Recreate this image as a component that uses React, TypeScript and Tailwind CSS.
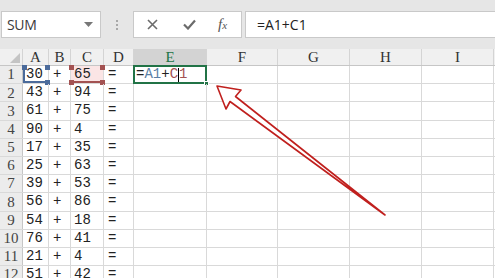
import React from "react";

const cols = [
  { key: "A", w: "w-[26px]" },
  { key: "B", w: "w-[22px]" },
  { key: "C", w: "w-[33px]" },
  { key: "D", w: "w-[30px]" },
  { key: "E", w: "w-[73px]" },
  { key: "F", w: "w-[71px]" },
  { key: "G", w: "w-[72px]" },
  { key: "H", w: "w-[72px]" },
  { key: "I", w: "w-[72px]" },
];

const rows = [
  ["30", "65"],
  ["43", "94"],
  ["61", "75"],
  ["90", "4"],
  ["17", "35"],
  ["25", "63"],
  ["39", "53"],
  ["56", "86"],
  ["54", "18"],
  ["76", "41"],
  ["21", "4"],
  ["51", "42"],
];

const cellFont = { fontFamily: '"Liberation Mono", "DejaVu Sans Mono", monospace' };
const headFont = { fontFamily: '"Liberation Serif", "DejaVu Serif", serif' };

const Handle = ({ className }: { className: string }) => (
  <span className={`absolute w-[5px] h-[5px] ${className}`} />
);

const TopBar = () => (
  <div className="h-[49px] bg-[#e6e6e6] flex items-start pt-[11px] font-['Open_Sans',sans-serif]">
    <div className="ml-[1px] w-[100px] h-[27px] bg-white border border-[#c9c9c9] flex items-center justify-between pl-[5px] pr-[7px]">
      <span className="text-[14px] text-[#3a3a3a] tracking-tight">SUM</span>
      <svg width="9" height="6" viewBox="0 0 9 6">
        <path d="M0 0 H9 L4.5 5 Z" fill="#777" />
      </svg>
    </div>
    <div className="w-[32px] h-[27px] flex flex-col items-center justify-center gap-[2px]">
      <span className="w-[2px] h-[2px] bg-[#a8a8a8]" />
      <span className="w-[2px] h-[2px] bg-[#a8a8a8]" />
      <span className="w-[2px] h-[2px] bg-[#a8a8a8]" />
    </div>
    <div className="w-[109px] h-[27px] bg-white border border-[#c9c9c9] flex items-center">
      <svg className="ml-[13px]" width="11" height="11" viewBox="0 0 11 11">
        <path d="M1 1 L10 10 M10 1 L1 10" stroke="#6b6b6b" strokeWidth="1.6" />
      </svg>
      <svg className="ml-[25px]" width="13" height="11" viewBox="0 0 13 11">
        <path d="M1 5.5 L5 9.5 L12 1.5" stroke="#6b6b6b" strokeWidth="2.2" fill="none" />
      </svg>
      <span className="ml-[22px] italic text-[15px] text-[#555] font-['Liberation_Serif',serif] leading-none">
        f<span className="text-[11px]">x</span>
      </span>
    </div>
    <div className="ml-[3px] flex-1 h-[27px] bg-white border border-[#c9c9c9] border-r-0 flex items-center pl-[11px]">
      <span className="text-[14px] text-[#222]">=A1+C1</span>
    </div>
  </div>
);

const HeaderRow = () => (
  <div className="flex h-[17px] bg-[#f0f0f0] border-b border-[#c6c6c6]" style={headFont}>
    <div className="w-[23px] relative border-r border-[#d4d4d4]">
      <svg className="absolute left-[10px] top-[4px]" width="10" height="10" viewBox="0 0 10 10">
        <path d="M10 0 L10 10 L0 10 Z" fill="#c4c4c4" />
      </svg>
    </div>
    {cols.map((c) => (
      <div
        key={c.key}
        className={`${c.w} shrink-0 flex items-center justify-center border-r border-[#d4d4d4] text-[15px] ${
          c.key === "E" ? "bg-[#d3d3d3] text-[#217346]" : "text-[#333]"
        }`}
      >
        {c.key}
      </div>
    ))}
  </div>
);

const DataRow = ({ n, a, c }: { n: number; a: string; c: string }) => {
  const first = n === 1;
  return (
    <div className="flex h-[18.2px] border-b border-[#d9d9d9] text-[14px] text-[#222]" style={cellFont}>
      <div
        className="w-[23px] shrink-0 bg-[#ececec] border-r border-[#c6c6c6] flex items-center justify-center text-[15px] text-[#444]"
        style={headFont}
      >
        {n}
      </div>
      <div className="w-[26px] shrink-0 relative flex items-center pl-[3px] border-r border-[#d9d9d9]">
        {a}
        {first && (
          <>
            <span className="absolute inset-[0px] border-2 border-[#4b6b9b] border-t-0 border-r-0" />
            <Handle className="bg-[#4b6b9b] -left-[1px] -top-[1px] h-[4px] w-[3px]" />
            <Handle className="bg-[#4b6b9b] -right-[2px] -top-[1px]" />
            <Handle className="bg-[#4b6b9b] -right-[2px] -bottom-[2px]" />
          </>
        )}
      </div>
      <div className="w-[22px] shrink-0 flex items-center pl-[4px] border-r border-[#d9d9d9]">+</div>
      <div
        className={`w-[33px] shrink-0 relative flex items-center pl-[3px] border-r border-[#d9d9d9] ${
          first ? "bg-[#fbe5e5]" : ""
        }`}
      >
        {c}
        {first && (
          <>
            <span className="absolute inset-0 border-b-2 border-[#a35252]" />
            <Handle className="bg-[#a35252] -left-[2px] -top-[1px]" />
            <Handle className="bg-[#a35252] -right-[2px] -top-[1px]" />
            <Handle className="bg-[#a35252] -left-[2px] -bottom-[2px]" />
            <Handle className="bg-[#a35252] -right-[2px] -bottom-[2px]" />
          </>
        )}
      </div>
      <div className="w-[30px] shrink-0 flex items-center pl-[4px] border-r border-[#d9d9d9]">=</div>
      <div className="w-[73px] shrink-0 relative flex items-center pl-[2px] border-r border-[#d9d9d9]">
        {first && (
          <>
            <span className="absolute -left-[1px] -top-[1px] -right-[1px] -bottom-[1px] border-2 border-[#217346]" />
            <Handle className="bg-[#217346] -right-[3px] -bottom-[3px] border border-white" />
            <span className="relative z-10 flex items-center">
              =<span className="text-[#5a7fa6]">A1</span>+<span className="text-[#a35252]">C</span>
              <span className="w-[1px] h-[14px] bg-black" />
              <span className="text-[#a35252]">1</span>
            </span>
          </>
        )}
      </div>
      {cols.slice(5).map((col) => (
        <div key={col.key} className={`${col.w} shrink-0 border-r border-[#d9d9d9]`} />
      ))}
    </div>
  );
};

const Arrow = () => (
  <svg className="absolute left-0 top-0 pointer-events-none" width="495" height="278" viewBox="0 0 495 278">
    <path
      d="M217 86 L241 90 L235.5 96.5 L385 215 L230 101.5 L226 109 Z"
      fill="#ffffff"
      stroke="#c0201e"
      strokeWidth="1.6"
      strokeLinejoin="round"
    />
  </svg>
);

const App = () => {
  return (
    <div className="relative w-[495px] h-[278px] overflow-hidden bg-white">
      <TopBar />
      <HeaderRow />
      {rows.map((r, i) => (
        <DataRow key={i} n={i + 1} a={r[0]} c={r[1]} />
      ))}
      <Arrow />
    </div>
  );
};

export default App;
